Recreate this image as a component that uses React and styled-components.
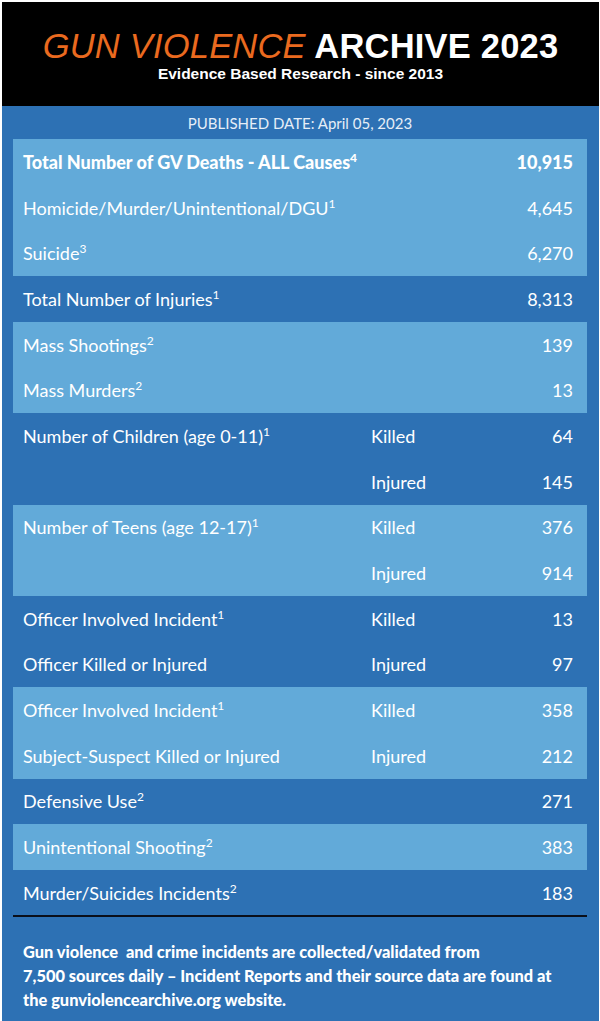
import React from 'react';
import styled, { createGlobalStyle } from 'styled-components';

const GlobalStyle = createGlobalStyle`
  html, body {
    margin: 0;
    padding: 0;
    background: #ffffff;
  }
`;

const Page = styled.div`
  width: 600px;
  height: 1021px;
  box-sizing: border-box;
  padding: 2px 1px 0 2px;
  display: flex;
  flex-direction: column;
  background: #ffffff;
`;

const Header = styled.header`
  height: 102px;
  background: #000000;
  display: flex;
  flex-direction: column;
  align-items: center;
  justify-content: center;
  font-family: 'Liberation Sans', Arial, sans-serif;
  padding-top: 2px;
`;

const Title = styled.h1`
  margin: 0;
  font-size: 34.5px;
  line-height: 37px;
  font-weight: 700;
  color: #ffffff;
  letter-spacing: 0.2px;
`;

const Orange = styled.span`
  color: #ea6a1f;
  font-style: italic;
  font-weight: 400;
`;

const Subtitle = styled.p`
  margin: 0;
  font-size: 15.5px;
  line-height: 18px;
  font-weight: 700;
  color: #ffffff;
`;

const Panel = styled.main`
  flex: 1;
  background: #2d71b4;
  padding: 0 12px 0 11px;
  font-family: Lato, 'Open Sans', sans-serif;
  color: #ffffff;
`;

const DateLine = styled.div`
  height: 33px;
  display: flex;
  align-items: center;
  justify-content: center;
  font-size: 15px;
  color: #e6eef7;
`;

const Block = styled.section`
  background: ${({ $light }) => ($light ? '#62aad9' : 'transparent')};
`;

const Row = styled.div`
  height: 45.7px;
  display: grid;
  grid-template-columns: 348px 1fr auto;
  align-items: center;
  padding: 0 14px 0 10px;
  font-size: 18px;
  font-weight: ${({ $bold }) => ($bold ? 900 : 400)};
`;

const Label = styled.span`
  grid-column: ${({ $wide }) => ($wide ? '1 / 3' : '1 / 2')};
  white-space: nowrap;
`;

const Sub = styled.span`
  grid-column: 2 / 3;
`;

const Value = styled.span`
  grid-column: 3 / 4;
  text-align: right;
`;

const Sup = styled.sup`
  font-size: 12px;
  line-height: 0;
  vertical-align: 7px;
`;

const Rule = styled.hr`
  margin: -1px 0 0;
  border: none;
  height: 2px;
  background: #0a0f1a;
`;

const Footer = styled.p`
  margin: 0;
  padding: 23px 10px 0;
  font-size: 16.4px;
  line-height: 24px;
  font-weight: 900;
  color: #ffffff;
  white-space: nowrap;
`;

const groups = [
  {
    light: true,
    rows: [
      { label: 'Total Number of GV Deaths - ALL Causes', sup: '4', value: '10,915', bold: true },
      { label: 'Homicide/Murder/Unintentional/DGU', sup: '1', value: '4,645' },
      { label: 'Suicide', sup: '3', value: '6,270' },
    ],
  },
  { light: false, rows: [{ label: 'Total Number of Injuries', sup: '1', value: '8,313' }] },
  {
    light: true,
    rows: [
      { label: 'Mass Shootings', sup: '2', value: '139' },
      { label: 'Mass Murders', sup: '2', value: '13' },
    ],
  },
  {
    light: false,
    rows: [
      { label: 'Number of Children (age 0-11)', sup: '1', sub: 'Killed', value: '64' },
      { label: '', sub: 'Injured', value: '145' },
    ],
  },
  {
    light: true,
    rows: [
      { label: 'Number of Teens (age 12-17)', sup: '1', sub: 'Killed', value: '376' },
      { label: '', sub: 'Injured', value: '914' },
    ],
  },
  {
    light: false,
    rows: [
      { label: 'Officer Involved Incident', sup: '1', sub: 'Killed', value: '13' },
      { label: 'Officer Killed or Injured', sub: 'Injured', value: '97' },
    ],
  },
  {
    light: true,
    rows: [
      { label: 'Officer Involved Incident', sup: '1', sub: 'Killed', value: '358' },
      { label: 'Subject-Suspect Killed or Injured', sub: 'Injured', value: '212' },
    ],
  },
  { light: false, rows: [{ label: 'Defensive Use', sup: '2', value: '271' }] },
  { light: true, rows: [{ label: 'Unintentional Shooting', sup: '2', value: '383' }] },
  { light: false, rows: [{ label: 'Murder/Suicides Incidents', sup: '2', value: '183' }] },
];

const StatRow = ({ row }) => (
  <Row $bold={row.bold}>
    <Label $wide={!row.sub}>
      {row.label}
      {row.sup && <Sup>{row.sup}</Sup>}
    </Label>
    {row.sub && <Sub>{row.sub}</Sub>}
    <Value>{row.value}</Value>
  </Row>
);

export default function App() {
  return (
    <Page>
      <GlobalStyle />
      <Header>
        <Title>
          <Orange>GUN VIOLENCE</Orange> ARCHIVE 2023
        </Title>
        <Subtitle>Evidence Based Research - since 2013</Subtitle>
      </Header>
      <Panel>
        <DateLine>PUBLISHED DATE: April 05, 2023</DateLine>
        {groups.map((group, i) => (
          <Block key={i} $light={group.light}>
            {group.rows.map((row, j) => (
              <StatRow key={j} row={row} />
            ))}
          </Block>
        ))}
        <Rule />
        <Footer>
          Gun violence&nbsp; and crime incidents are collected/validated from
          <br />
          7,500 sources daily – Incident Reports and their source data are found at
          <br />
          the gunviolencearchive.org website.
        </Footer>
      </Panel>
    </Page>
  );
}
